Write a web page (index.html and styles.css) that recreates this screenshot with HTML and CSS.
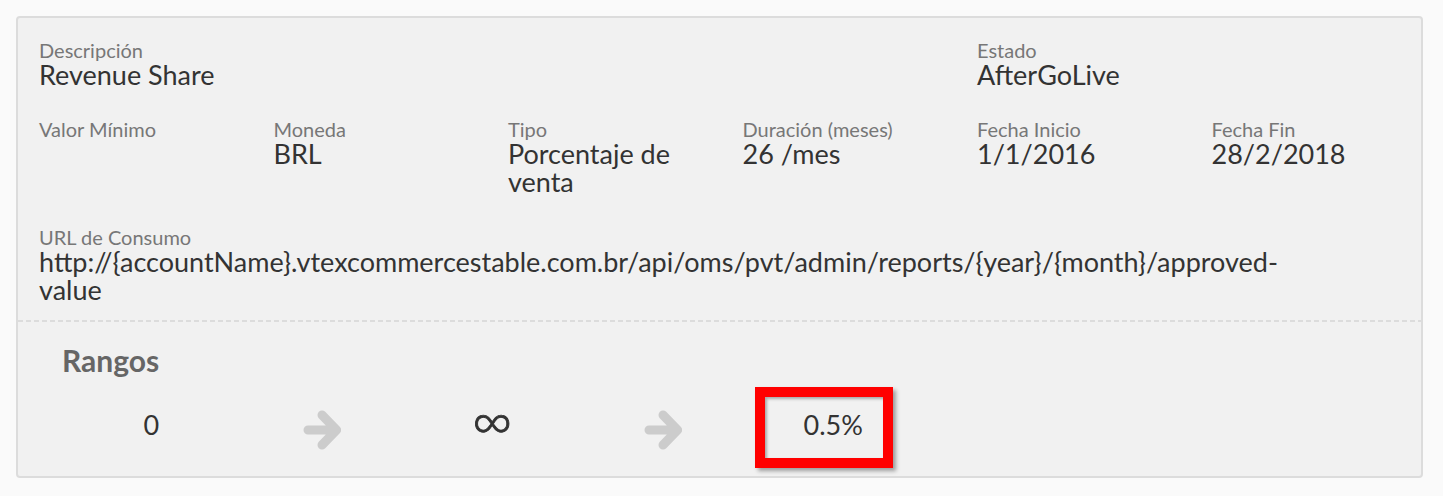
FILE: index.html
```html
<!DOCTYPE html>
<html lang="es">
<head>
<meta charset="utf-8">
<title>Revenue Share</title>
<link rel="stylesheet" href="styles.css">
</head>
<body>
<div class="card">
  <div class="info">
    <div class="grid">
      <div class="field span4">
        <div class="label">Descripción</div>
        <div class="value">Revenue Share</div>
      </div>
      <div class="field">
        <div class="label">Estado</div>
        <div class="value">AfterGoLive</div>
      </div>
    </div>
    <div class="grid">
      <div class="field">
        <div class="label">Valor Mínimo</div>
        <div class="value"></div>
      </div>
      <div class="field">
        <div class="label">Moneda</div>
        <div class="value">BRL</div>
      </div>
      <div class="field">
        <div class="label">Tipo</div>
        <div class="value">Porcentaje de venta</div>
      </div>
      <div class="field">
        <div class="label">Duración (meses)</div>
        <div class="value">26 /mes</div>
      </div>
      <div class="field">
        <div class="label">Fecha Inicio</div>
        <div class="value">1/1/2016</div>
      </div>
      <div class="field">
        <div class="label">Fecha Fin</div>
        <div class="value">28/2/2018</div>
      </div>
    </div>
    <div class="grid grid-url">
      <div class="field url">
        <div class="label">URL de Consumo</div>
        <div class="value">http://{accountName}.vtexcommercestable.com.br/api/oms/pvt/admin/reports/{year}/{month}/approved-value</div>
      </div>
    </div>
  </div>
  <div class="divider"></div>
  <div class="ranges">
    <h2 class="ranges-title">Rangos</h2>
    <div class="range-row">
      <div class="range-cell range-num">0</div>
      <div class="range-cell range-arrow">
        <svg width="38" height="40" viewBox="0 0 38 40" aria-hidden="true"><path d="M5 20 H33 M19 5 L33.5 20 L19 35" fill="none" stroke="#cccccc" stroke-width="9" stroke-linecap="round" stroke-linejoin="round"/></svg>
      </div>
      <div class="range-cell range-num range-inf">∞</div>
      <div class="range-cell range-arrow">
        <svg width="38" height="40" viewBox="0 0 38 40" aria-hidden="true"><path d="M5 20 H33 M19 5 L33.5 20 L19 35" fill="none" stroke="#cccccc" stroke-width="9" stroke-linecap="round" stroke-linejoin="round"/></svg>
      </div>
      <div class="range-cell range-num range-pct">0.5%<span class="highlight"></span></div>
    </div>
  </div>
</div>
</body>
</html>
```

FILE: styles.css
```css
* { box-sizing: border-box; }
html, body { margin: 0; padding: 0; }
body {
  background: #fafafa;
  padding: 16px;
  font-family: Lato, "Open Sans", Arial, sans-serif;
  color: #333;
}
.card {
  width: 1407px;
  height: 462px;
  background: #f1f1f1;
  border: 2px solid #dcdcdc;
  border-radius: 4px;
}
.info {
  padding: 21px 0 16px 21px;
  display: flex;
  flex-direction: column;
  gap: 29px;
}
.grid {
  display: grid;
  grid-template-columns: repeat(5, 234.5px) 1fr;
}
.grid-url { margin-top: 1px; }
.span4 { grid-column: span 4; }
.url { grid-column: span 6; max-width: 1260px; }
.field { padding-right: 15px; }
.label {
  font-size: 20px;
  line-height: 22px;
  color: #777;
}
.value {
  font-size: 27px;
  line-height: 28px;
  color: #333;
  min-height: 28px;
}
.divider {
  height: 2px;
  background-image: repeating-linear-gradient(90deg, #dcdcdc 0 5px, transparent 5px 8px);
}
.ranges {
  padding: 22px 0 0 44px;
}
.ranges-title {
  margin: 0;
  font-size: 30px;
  line-height: 32px;
  font-weight: 700;
  color: #666;
}
.range-row {
  display: grid;
  grid-template-columns: repeat(5, 170.5px);
  margin-top: 25px;
  margin-left: 4px;
}
.range-cell {
  height: 64px;
  display: flex;
  justify-content: center;
}
.range-num {
  font-size: 27px;
  line-height: 28px;
  padding-top: 10px;
  color: #333;
}
.range-inf {
  font-size: 55px;
  font-weight: 300;
  -webkit-text-stroke: 0.9px #333;
  line-height: 28px;
  padding-top: 4px;
}
.range-arrow { padding-top: 9px; }
.range-pct { position: relative; }
.highlight {
  position: absolute;
  left: 7px;
  top: -14px;
  width: 138px;
  height: 81px;
  border: 10px solid #ff0000;
  box-shadow: 3px 3px 4px rgba(0, 0, 0, 0.35), inset 2px 2px 3px rgba(0, 0, 0, 0.3);
}
```
